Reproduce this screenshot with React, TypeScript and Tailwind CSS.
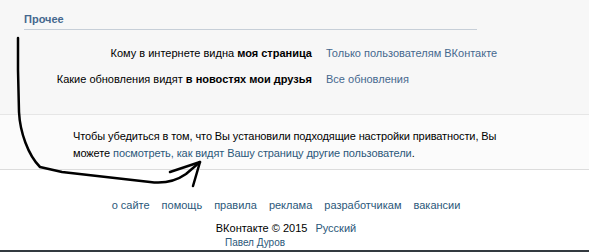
import React from 'react';

const font = "font-['Tahoma','Liberation_Sans',sans-serif]";

const Row = ({ label, bold, value }: { label: string; bold: string; value: string }) => (
  <div className="flex leading-[14px]">
    <div className="w-[312px] text-right text-black">
      {label} <b>{bold}</b>
    </div>
    <a className="pl-[14px] text-[#45688e]">{value}</a>
  </div>
);

const links = ['о сайте', 'помощь', 'правила', 'реклама', 'разработчикам', 'вакансии'];

export default function App() {
  return (
    <div className={`relative w-[589px] h-[252px] overflow-hidden bg-white text-[11px] ${font}`}>
      <div className="h-[114px] bg-[#f7f7f7] pt-[12px]">
        <div className="ml-[24px] w-[453px] border-b border-[#c7cfd8] pb-[3px] font-bold leading-[14px] text-[#45688e]">
          Прочее
        </div>
        <div className="mt-[16px] flex flex-col gap-[12px]">
          <Row label="Кому в интернете видна" bold="моя страница" value="Только пользователям ВКонтакте" />
          <Row label="Какие обновления видят" bold="в новостях мои друзья" value="Все обновления" />
        </div>
      </div>

      <div className="border-y border-t-[#e6e6e6] border-b-[#dcdcdc] bg-[#fbfbfb] pt-[13px] pb-[7px] pl-[73px] leading-[17px] tracking-[-0.1px] text-black">
        Чтобы убедиться в том, что Вы установили подходящие настройки приватности, Вы
        <br />
        можете <a className="text-[#2b587a]">посмотреть, как видят Вашу страницу другие пользователи</a>.
      </div>

      <div className="mt-[28px] flex justify-center gap-[12px] pr-[17px] leading-[14px] text-[#2b587a]">
        {links.map((l) => (
          <a key={l}>{l}</a>
        ))}
      </div>
      <div className="mt-[9px] flex justify-center gap-[8px] pr-[17px] leading-[14px] text-black">
        <span>ВКонтакте © 2015</span>
        <a className="text-[#2b587a]">Русский</a>
      </div>
      <div className="mt-[1px] flex justify-center pr-[79px] text-[10px] leading-[13px] text-[#2b587a]">
        <a>Павел Дуров</a>
      </div>
      <div className="absolute bottom-0 left-0 h-[2px] w-full bg-[#333a40]" />

      <svg className="pointer-events-none absolute inset-0" width="589" height="252" viewBox="0 0 589 252">
        <path
          d="M18 38 L18 70 L19 112 C20 132 28 155 40 167 L62 172 L150 182 C165 184 176 181 186 174 L200 162"
          fill="none"
          stroke="#000"
          strokeWidth="2.5"
          strokeLinecap="round"
          strokeLinejoin="round"
        />
        <path
          d="M170 172 L200 162 L193 186"
          fill="none"
          stroke="#000"
          strokeWidth="2.5"
          strokeLinecap="round"
          strokeLinejoin="round"
        />
      </svg>
    </div>
  );
}
